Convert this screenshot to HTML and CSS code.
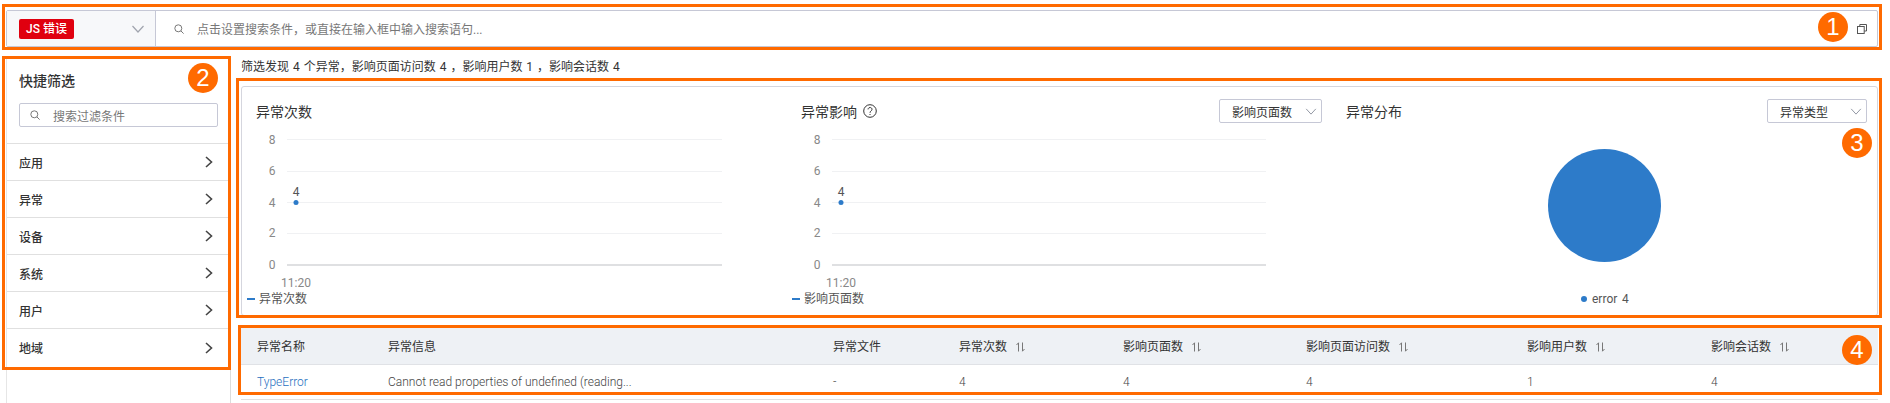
FILE: index.html
```html
<!DOCTYPE html>
<html lang="zh">
<head>
<meta charset="utf-8">
<title>JS 错误</title>
<link rel="stylesheet" href="styles.css">
</head>
<body>
<div class="page">
  <header class="searchbar">
    <div class="type-select">
      <span class="tag">JS 错误</span>
      <svg class="chev-lg" viewBox="0 0 12 8"><path d="M.5 1 6 7l5.500-6"/></svg>
    </div>
    <div class="search-main">
      <svg class="search-ico" viewBox="0 0 10 10"><circle cx="4.300" cy="4.300" r="3.500"/><path d="m6.900 6.900 2.700 2.700"/></svg>
      <span class="placeholder">点击设置搜索条件，或直接在输入框中输入搜索语句...</span>
      <svg class="copy-ico" viewBox="0 0 10 10"><path d="M2.800 2.500V.5h6.700v6.500H7.200"/><rect x=".5" y="2.500" width="6.700" height="7"/></svg>
    </div>
  </header>

  <div class="main">
    <aside class="sidebar">
      <div class="side-head">
        <h2 class="side-title">快捷筛选</h2>
        <div class="side-input">
          <svg class="search-ico" viewBox="0 0 10 10"><circle cx="4.300" cy="4.300" r="3.500"/><path d="m6.900 6.900 2.700 2.700"/></svg>
          <span class="placeholder">搜索过滤条件</span>
        </div>
      </div>
      <div class="side-row"><span>应用</span><svg class="chev-r" viewBox="0 0 8 12"><path d="m1 1 5.500 5L1 11"/></svg></div>
      <div class="side-row"><span>异常</span><svg class="chev-r" viewBox="0 0 8 12"><path d="m1 1 5.500 5L1 11"/></svg></div>
      <div class="side-row"><span>设备</span><svg class="chev-r" viewBox="0 0 8 12"><path d="m1 1 5.500 5L1 11"/></svg></div>
      <div class="side-row"><span>系统</span><svg class="chev-r" viewBox="0 0 8 12"><path d="m1 1 5.500 5L1 11"/></svg></div>
      <div class="side-row"><span>用户</span><svg class="chev-r" viewBox="0 0 8 12"><path d="m1 1 5.500 5L1 11"/></svg></div>
      <div class="side-row"><span>地域</span><svg class="chev-r" viewBox="0 0 8 12"><path d="m1 1 5.500 5L1 11"/></svg></div>
    </aside>

    <section class="content">
      <p class="summary">筛选发现 4 个异常，影响页面访问数 4 ，影响用户数 1 ，影响会话数 4</p>

      <div class="card">
        <div class="chart">
          <div class="chart-head"><h3 class="chart-title">异常次数</h3></div>
          <svg class="plot" viewBox="0 0 531 190">
            <g class="grid"><path d="M40 16.500h435M40 48.500h435M40 79.500h435M40 110.500h435"/><path class="base" d="M40 142h435"/></g>
            <g class="ax"><text x="25" y="21">8</text><text x="25" y="52">6</text><text x="25" y="84">4</text><text x="25" y="114">2</text><text x="25" y="146">0</text><text x="49" y="164">11:20</text></g>
            <text class="val" x="49" y="73">4</text>
            <circle class="pt" cx="49" cy="79.500" r="2.500"/>
            <rect class="dash" x="0" y="175" width="8" height="2"/>
            <text class="lg" x="12" y="180">异常次数</text>
          </svg>
        </div>

        <div class="chart">
          <div class="chart-head">
            <h3 class="chart-title">异常影响<svg class="help" viewBox="0 0 14 14"><circle cx="7" cy="7" r="6.300"/><path d="M5.100 5.400C5.100 2.800 9 3 9 5.300c0 1.700-2 1.600-2 3.500"/><path d="M7 10v1"/></svg></h3>
            <div class="select select-a"><span>影响页面数</span><svg class="chev-sm" viewBox="0 0 12 8"><path d="M.5 1 6 7l5.500-6"/></svg></div>
          </div>
          <svg class="plot" viewBox="0 0 531 190">
            <g class="grid"><path d="M40 16.500h434M40 48.500h434M40 79.500h434M40 110.500h434"/><path class="base" d="M40 142h434"/></g>
            <g class="ax"><text x="25" y="21">8</text><text x="25" y="52">6</text><text x="25" y="84">4</text><text x="25" y="114">2</text><text x="25" y="146">0</text><text x="49" y="164">11:20</text></g>
            <text class="val" x="49" y="73">4</text>
            <circle class="pt" cx="49" cy="79.500" r="2.500"/>
            <rect class="dash" x="0" y="175" width="8" height="2"/>
            <text class="lg" x="12" y="180">影响页面数</text>
          </svg>
        </div>

        <div class="chart">
          <div class="chart-head">
            <h3 class="chart-title">异常分布</h3>
            <div class="select select-b"><span>异常类型</span><svg class="chev-sm" viewBox="0 0 12 8"><path d="M.5 1 6 7l5.500-6"/></svg></div>
          </div>
          <svg class="plot" viewBox="0 0 531 190">
            <circle class="pie" cx="267.500" cy="82.500" r="56.500"/>
            <circle class="pt" cx="247" cy="176" r="3"/>
            <text class="lg" x="255" y="180">error</text>
            <text class="lg" x="285" y="180">4</text>
          </svg>
        </div>
      </div>

      <table class="table">
        <colgroup>
          <col class="c1"><col class="c2"><col class="c3"><col class="c4"><col class="c5"><col class="c6"><col class="c7"><col class="c8">
        </colgroup>
        <thead>
          <tr>
            <th>异常名称</th>
            <th>异常信息</th>
            <th>异常文件</th>
            <th>异常次数<svg class="sort" viewBox="0 0 9 10"><path d="M2.500 9.500V.8L.5 3M6.500.5v8.700L8.500 7"/></svg></th>
            <th>影响页面数<svg class="sort" viewBox="0 0 9 10"><path d="M2.500 9.500V.8L.5 3M6.500.5v8.700L8.500 7"/></svg></th>
            <th>影响页面访问数<svg class="sort" viewBox="0 0 9 10"><path d="M2.500 9.500V.8L.5 3M6.500.5v8.700L8.500 7"/></svg></th>
            <th>影响用户数<svg class="sort" viewBox="0 0 9 10"><path d="M2.500 9.500V.8L.5 3M6.500.5v8.700L8.500 7"/></svg></th>
            <th>影响会话数<svg class="sort" viewBox="0 0 9 10"><path d="M2.500 9.500V.8L.5 3M6.500.5v8.700L8.500 7"/></svg></th>
          </tr>
        </thead>
        <tbody>
          <tr>
            <td><a class="link">TypeError</a></td>
            <td>Cannot read properties of undefined (reading...</td>
            <td>-</td>
            <td>4</td>
            <td>4</td>
            <td>4</td>
            <td>1</td>
            <td>4</td>
          </tr>
        </tbody>
      </table>
    </section>
  </div>

  <div class="mark mark-1"></div>
  <div class="mark mark-2"></div>
  <div class="mark mark-3"></div>
  <div class="mark mark-4"></div>
  <span class="badge badge-1">1</span>
  <span class="badge badge-2">2</span>
  <span class="badge badge-3">3</span>
  <span class="badge badge-4">4</span>
</div>
</body>
</html>
```

FILE: styles.css
```css
* { box-sizing: border-box; }
html, body { margin: 0; padding: 0; background: #fff; }
body {
  font-family: Roboto, "Noto Sans CJK SC", sans-serif;
  font-size: 12px;
  color: #333;
}
svg { display: block; fill: none; }

.page {
  position: relative;
  width: 1890px;
  height: 403px;
  overflow: hidden;
  padding: 10px 12px 0 6px;
}

/* search bar */
.searchbar {
  display: flex;
  height: 37px;
  border: 1px solid #c6c8d6;
  border-radius: 2px;
}
.type-select {
  display: flex;
  align-items: center;
  justify-content: space-between;
  width: 149px;
  padding: 0 11px 0 12px;
  background: #f7f8fa;
  border-right: 1px solid #c6c8d6;
}
.tag {
  width: 55px;
  height: 20px;
  line-height: 20px;
  text-align: center;
  color: #fff;
  font-weight: 500;
  background: #e0000f;
  border-radius: 2px;
}
.chev-lg { width: 12px; height: 8px; stroke: #a0a4ae; stroke-width: 1.200; }
.search-main {
  flex: 1;
  display: flex;
  align-items: center;
  padding: 0 10px 0 18px;
}
.search-ico { width: 10px; height: 10px; stroke: #777; stroke-width: 1; flex: none; }
.placeholder { margin-left: 13px; color: #777; }
.copy-ico { width: 10px; height: 10px; margin-left: auto; stroke: #555; stroke-width: 1; }

/* layout */
.main { display: flex; margin-top: 12px; height: 344px; }

/* sidebar */
.sidebar {
  width: 225px;
  flex: none;
  border-left: 1px solid #e6e6e6;
  border-right: 1px solid #dcdcdc;
}
.side-head { height: 85px; padding: 11px 12px 0; border-bottom: 1px solid #e0e0e0; }
.side-title { margin: 0 0 11px; font-size: 14px; line-height: 22px; font-weight: 500; color: #333; }
.side-input {
  display: flex;
  align-items: center;
  height: 24px;
  padding-left: 10px;
  border: 1px solid #c6c8d6;
  border-radius: 2px;
}
.side-row {
  display: flex;
  align-items: center;
  justify-content: space-between;
  height: 37px;
  padding: 0 17px 0 12px;
  font-weight: 500;
  border-bottom: 1px solid #e0e0e0;
}
.side-row:last-child { border-bottom: 0; }
.chev-r { width: 8px; height: 12px; stroke: #444; stroke-width: 1.600; }

/* content */
.content { margin-left: 10px; width: 1637px; flex: none; }
.summary { margin: 0; height: 27px; line-height: 16px; word-spacing: 1px; }

.card {
  display: grid;
  grid-template-columns: repeat(3, 521px);
  column-gap: 24px;
  height: 230px;
  padding: 12px 0 0 14px;
  border: 1px solid #d5d6de;
  border-radius: 3px;
}
.chart-head {
  display: flex;
  align-items: center;
  justify-content: space-between;
  height: 24px;
}
.chart-title {
  display: flex;
  align-items: center;
  margin: 0;
  font-size: 14px;
  font-weight: 400;
  color: #333;
}
.help { width: 14px; height: 14px; margin-left: 6px; stroke: #333; stroke-width: 1; }
.select {
  display: flex;
  align-items: center;
  justify-content: space-between;
  height: 24px;
  padding: 0 4px 0 12px;
  border: 1px solid #c6c8d6;
  border-radius: 2px;
}
.select-a { width: 103px; }
.select-b { width: 100px; }
.chev-sm { width: 12px; height: 7px; stroke: #8f94a0; stroke-width: 1.100; }

.plot { width: 531px; height: 190px; margin-left: -9px; }
.grid path { stroke: #f0f1f3; stroke-width: 1; }
.grid .base { stroke: #dfe0e2; stroke-width: 2; }
.ax text { fill: #888; font-size: 12px; text-anchor: middle; }
.val { fill: #555; font-size: 12px; text-anchor: middle; }
.pt { fill: #2d7bc9; }
.pie { fill: #2d7bc9; }
.dash { fill: #2d7bc9; }
.lg { fill: #555; font-size: 12px; }

/* table */
.table {
  width: 1637px;
  margin-top: 12px;
  border-collapse: collapse;
  table-layout: fixed;
}
.c1 { width: 131px; }
.c2 { width: 445px; }
.c3 { width: 126px; }
.c4 { width: 164px; }
.c5 { width: 183px; }
.c6 { width: 221px; }
.c7 { width: 184px; }
.c8 { width: 183px; }
.table th {
  height: 36px;
  padding: 0 0 0 16px;
  text-align: left;
  font-weight: 400;
  color: #333;
  background: #eef1f5;
  border-bottom: 1px solid #e0e2e6;
  white-space: nowrap;
}
.table td {
  height: 35px;
  padding: 0 0 0 16px;
  color: #444;
  font-weight: 300;
  border-bottom: 1px solid #e0e0e0;
  white-space: nowrap;
}
.link { color: #1f6fc0; }
.sort {
  display: inline-block;
  vertical-align: -1px;
  width: 9px;
  height: 10px;
  margin-left: 9px;
  stroke: #777;
  stroke-width: 1;
}

/* annotation overlays */
.mark { position: absolute; border: 3px solid #ff6a00; }
.mark-1 { left: 2px; top: 4px; width: 1880px; height: 46px; }
.mark-2 { left: 2px; top: 56px; width: 229px; height: 314px; }
.mark-3 { left: 236px; top: 78px; width: 1646px; height: 240px; }
.mark-4 { left: 238px; top: 325px; width: 1644px; height: 70px; }
.badge {
  position: absolute;
  width: 30px;
  height: 30px;
  line-height: 30px;
  text-align: center;
  color: #fff;
  font-family: "Liberation Sans", sans-serif;
  font-size: 24px;
  background: #ff6a00;
  border-radius: 50%;
}
.badge-1 { left: 1818px; top: 12px; }
.badge-2 { left: 188px; top: 63px; }
.badge-3 { left: 1842px; top: 128px; }
.badge-4 { left: 1842px; top: 335px; }
```
